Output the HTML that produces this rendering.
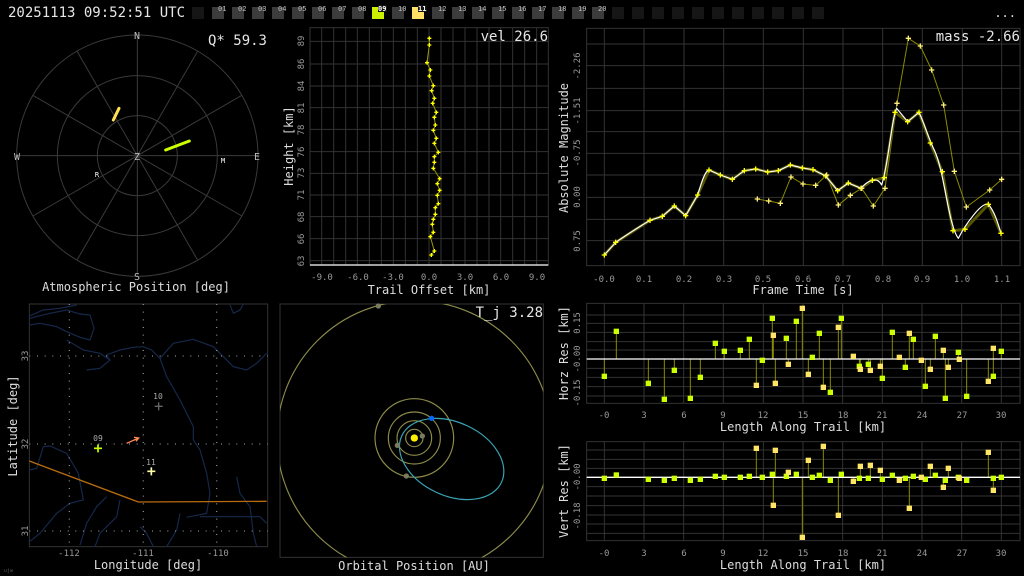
<!DOCTYPE html>
<html><head><meta charset="utf-8"><style>
html,body{margin:0;padding:0;background:#000;width:1024px;height:576px;overflow:hidden}
svg{display:block}
text{font-family:"DejaVu Sans Mono","Liberation Mono",monospace}
.t{fill:#ddd;font-size:12px}
.k{fill:#999;font-size:9px}
.big{fill:#e6e6e6;font-size:14px}
.g{stroke:#333;stroke-width:3;fill:none}
.c{stroke:#ffff00;stroke-width:4;fill:none}
</style></head><body>
<svg width="1024" height="576" viewBox="0 0 1024 576" xmlns="http://www.w3.org/2000/svg">
<rect width="1024" height="576" fill="#000"/>
<!-- top bar -->
<text x="8" y="17" class="big" style="font-size:14px">20251113 09:52:51 UTC</text>
<g>
<rect x="192" y="7" width="12" height="12" fill="#161616"/>
<g fill="#3c3c3c">
<rect x="212" y="7" width="12" height="12"/><rect x="232" y="7" width="12" height="12"/><rect x="252" y="7" width="12" height="12"/><rect x="272" y="7" width="12" height="12"/><rect x="292" y="7" width="12" height="12"/><rect x="312" y="7" width="12" height="12"/><rect x="332" y="7" width="12" height="12"/><rect x="352" y="7" width="12" height="12"/>
<rect x="392" y="7" width="12" height="12"/>
<rect x="432" y="7" width="12" height="12"/><rect x="452" y="7" width="12" height="12"/><rect x="472" y="7" width="12" height="12"/><rect x="492" y="7" width="12" height="12"/><rect x="512" y="7" width="12" height="12"/><rect x="532" y="7" width="12" height="12"/><rect x="552" y="7" width="12" height="12"/><rect x="572" y="7" width="12" height="12"/><rect x="592" y="7" width="12" height="12"/>
</g>
<rect x="372" y="7" width="12" height="12" fill="#ccee00"/>
<rect x="412" y="7" width="12" height="12" fill="#ffe066"/>
<g fill="#161616">
<rect x="612" y="7" width="12" height="12"/><rect x="632" y="7" width="12" height="12"/><rect x="652" y="7" width="12" height="12"/><rect x="672" y="7" width="12" height="12"/><rect x="692" y="7" width="12" height="12"/><rect x="712" y="7" width="12" height="12"/><rect x="732" y="7" width="12" height="12"/><rect x="752" y="7" width="12" height="12"/><rect x="772" y="7" width="12" height="12"/><rect x="792" y="7" width="12" height="12"/><rect x="812" y="7" width="12" height="12"/>
</g>
<rect x="378" y="5" width="9" height="7" fill="#111"/><rect x="418" y="5" width="9" height="7" fill="#111"/>
<g style="font-size:7px" fill="#bbb">
<text x="218" y="11">01</text><text x="238" y="11">02</text><text x="258" y="11">03</text><text x="278" y="11">04</text><text x="298" y="11">05</text><text x="318" y="11">06</text><text x="338" y="11">07</text><text x="358" y="11">08</text><text x="378" y="11" fill="#fff" style="font-weight:bold">09</text><text x="398" y="11">10</text><text x="418" y="11" fill="#fff" style="font-weight:bold">11</text><text x="438" y="11">12</text><text x="458" y="11">13</text><text x="478" y="11">14</text><text x="498" y="11">15</text><text x="518" y="11">16</text><text x="538" y="11">17</text><text x="558" y="11">18</text><text x="578" y="11">19</text><text x="598" y="11">20</text>
</g>
<text x="1016" y="17" text-anchor="end" class="t">...</text>
</g>

<!-- polar -->
<g transform="translate(0,25) scale(0.33333)" stroke="#3a3a3a" stroke-width="3" fill="none">
<circle cx="412" cy="392" r="120"/><circle cx="412" cy="392" r="240"/><circle cx="412" cy="392" r="362"/>
<line x1="50" y1="392" x2="774" y2="392"/><line x1="412" y1="30" x2="412" y2="754"/>
<line x1="98.5" y1="211" x2="725.5" y2="573"/><line x1="98.5" y1="573" x2="725.5" y2="211"/>
<line x1="231" y1="78.5" x2="593" y2="705.5"/><line x1="231" y1="705.5" x2="593" y2="78.5"/>
<line x1="340" y1="285" x2="357" y2="250" stroke="#ffe055" stroke-width="9" stroke-linecap="round"/>
<line x1="497" y1="375" x2="568" y2="348" stroke="#ccff00" stroke-width="9" stroke-linecap="round"/>
</g>
<g class="t" text-anchor="middle" style="font-size:10px;fill:#bbb">
<text x="137" y="39">N</text><text x="137" y="280">S</text><text x="17" y="160">W</text><text x="257" y="160">E</text><text x="137" y="160">Z</text>
<text x="223" y="163" style="font-size:7px;fill:#fff">M</text><text x="97" y="177" style="font-size:7px;fill:#fff">R</text>
</g>
<text x="267" y="45" text-anchor="end" class="big">Q* 59.3</text>
<text x="136" y="291" text-anchor="middle" class="t">Atmospheric Position [deg]</text>

<!-- height/trail -->
<g transform="translate(280,25) scale(0.33333)">
<rect x="90" y="8" width="715" height="712" class="g"/>
<g class="g">
<path d="M125 8V720M161 8V720M197 8V720M232 8V720M268 8V720M304 8V720M340 8V720M376 8V720M412 8V720M447 8V720M483 8V720M519 8V720M555 8V720M591 8V720M627 8V720M662 8V720M698 8V720M734 8V720M770 8V720"/>
<path d="M90 49H805M90 117H805M90 183H805M90 248H805M90 313H805M90 380H805M90 445H805M90 510H805M90 575H805M90 641H805M90 707H805"/>
</g>
<line x1="90" y1="720" x2="805" y2="720" stroke="#fff" stroke-width="4"/>
<polyline fill="none" stroke="#999900" stroke-width="3" points="448,40 448,60 441,113 451,135 448,153 460,182 455,197 463,220 458,235 469,262 463,277 466,300 460,316 469,340 463,355 475,382 463,395 463,412 460,430 479,461 472,476 479,496 472,511 475,536 466,548 466,568 460,583 457,598 460,622 451,635 463,678 454,690"/>
<path class="c" d="M442 40h12M448 34v12M442 60h12M448 54v12M435 113h12M441 107v12M445 135h12M451 129v12M442 153h12M448 147v12M454 182h12M460 176v12M449 197h12M455 191v12M457 220h12M463 214v12M452 235h12M458 229v12M463 262h12M469 256v12M457 277h12M463 271v12M460 300h12M466 294v12M454 316h12M460 310v12M463 340h12M469 334v12M457 355h12M463 349v12M469 382h12M475 376v12M457 395h12M463 389v12M457 412h12M463 406v12M454 430h12M460 424v12M473 461h12M479 455v12M466 476h12M472 470v12M473 496h12M479 490v12M466 511h12M472 505v12M469 536h12M475 530v12M460 548h12M466 542v12M460 568h12M466 562v12M454 583h12M460 577v12M451 598h12M457 592v12M454 622h12M460 616v12M445 635h12M451 629v12M457 678h12M463 672v12M448 690h12M454 684v12"/>
</g>
<text x="548" y="41" text-anchor="end" class="big">vel 26.6</text>
<g class="k" text-anchor="middle">
<text transform="translate(304,41) rotate(-90)">89</text><text transform="translate(304,64) rotate(-90)">86</text><text transform="translate(304,86) rotate(-90)">84</text><text transform="translate(304,108) rotate(-90)">81</text><text transform="translate(304,130) rotate(-90)">78</text><text transform="translate(304,152) rotate(-90)">76</text><text transform="translate(304,173) rotate(-90)">73</text><text transform="translate(304,195) rotate(-90)">71</text><text transform="translate(304,217) rotate(-90)">68</text><text transform="translate(304,239) rotate(-90)">66</text><text transform="translate(304,261) rotate(-90)">63</text>
<text x="322" y="280">-9.0</text><text x="358" y="280">-6.0</text><text x="393" y="280">-3.0</text><text x="429" y="280">0.0</text><text x="465" y="280">3.0</text><text x="501" y="280">6.0</text><text x="537" y="280">9.0</text>
</g>
<text transform="translate(293,146) rotate(-90)" text-anchor="middle" class="t">Height [km]</text>
<text x="429" y="294" text-anchor="middle" class="t">Trail Offset [km]</text>

<!-- magnitude -->
<g transform="translate(555,25) scale(0.33333)">
<rect x="95" y="10" width="1300" height="712" class="g"/>
<g class="g">
<path d="M148 10V722M267 10V722M387 10V722M506 10V722M625 10V722M745 10V722M864 10V722M983 10V722M1102 10V722M1222 10V722M1340 10V722"/>
<path d="M95 57H1395M95 122H1395M95 190H1395M95 257H1395M95 320H1395M95 385H1395M95 450H1395M95 517H1395M95 583H1395M95 647H1395"/>
</g>
<polyline fill="none" stroke="#8a8a00" stroke-width="3" points="607,522 641,528 676,535 708,456 744,477 782,481 815,450 850,540 886,511 920,490 955,543 990,490 1026,235 1060,40 1096,63 1130,135 1166,240 1198,439 1234,546 1304,495 1340,463"/>
<polyline fill="none" stroke="#555500" stroke-width="9" stroke-linejoin="round" points="148,690 182,652 285,586 322,574 358,543 392,572 428,510 462,435 496,450 532,463 568,437 602,432 638,441 670,437 706,420 742,429 774,434 812,453 848,497 880,474 918,490 952,466 988,458 1020,262 1058,290 1092,262 1126,354 1162,440 1194,617 1230,613 1300,538 1338,625"/>
<path fill="none" stroke="#fff" stroke-width="3.5" stroke-linejoin="round" d="M148,690 L182,652 C230,620 260,600 285,586 L322,574 L358,543 L392,572 L428,510 C440,470 450,438 462,435 L496,450 L532,463 L568,437 L602,432 L638,441 L670,437 L706,420 L742,429 L774,434 L812,453 L848,497 L880,474 L918,490 C935,470 965,450 980,480 C1000,420 1010,280 1025,250 L1058,290 L1092,262 C1110,300 1120,340 1140,380 C1170,450 1180,600 1210,640 C1230,600 1280,530 1300,538 C1320,560 1330,600 1338,625"/>
<path class="c" d="M140 690h16M148 682v16M174 652h16M182 644v16M277 586h16M285 578v16M314 574h16M322 566v16M350 543h16M358 535v16M384 572h16M392 564v16M420 510h16M428 502v16M454 435h16M462 427v16M488 450h16M496 442v16M524 463h16M532 455v16M560 437h16M568 429v16M594 432h16M602 424v16M630 441h16M638 433v16M662 437h16M670 429v16M698 420h16M706 412v16M734 429h16M742 421v16M766 434h16M774 426v16M804 453h16M812 445v16M840 497h16M848 489v16M872 474h16M880 466v16M910 490h16M918 482v16M944 466h16M952 458v16M980 458h16M988 450v16M1012 262h16M1020 254v16M1050 290h16M1058 282v16M1084 262h16M1092 254v16M1118 354h16M1126 346v16M1154 440h16M1162 432v16M1186 617h16M1194 609v16M1222 613h16M1230 605v16M1292 538h16M1300 530v16M1330 625h16M1338 617v16"/>
<path d="M599 522h16M607 514v16M633 528h16M641 520v16M668 535h16M676 527v16M700 456h16M708 448v16M736 477h16M744 469v16M774 481h16M782 473v16M807 450h16M815 442v16M842 540h16M850 532v16M878 511h16M886 503v16M912 490h16M920 482v16M947 543h16M955 535v16M982 490h16M990 482v16M1018 235h16M1026 227v16M1052 40h16M1060 32v16M1088 63h16M1096 55v16M1122 135h16M1130 127v16M1158 240h16M1166 232v16M1190 439h16M1198 431v16M1226 546h16M1234 538v16M1296 495h16M1304 487v16M1332 463h16M1340 455v16" stroke="#ffee77" stroke-width="4" fill="none"/>
</g>
<text x="1020" y="41" text-anchor="end" class="big">mass -2.66</text>
<g class="k" text-anchor="middle">
<text transform="translate(580,66) rotate(-90)">-2.26</text><text transform="translate(580,111) rotate(-90)">-1.51</text><text transform="translate(580,153) rotate(-90)">-0.75</text><text transform="translate(580,197) rotate(-90)">0.00</text><text transform="translate(580,241) rotate(-90)">0.75</text>
<text x="604" y="282">-0.0</text><text x="644" y="282">0.1</text><text x="684" y="282">0.2</text><text x="724" y="282">0.3</text><text x="763" y="282">0.5</text><text x="803" y="282">0.6</text><text x="843" y="282">0.7</text><text x="883" y="282">0.8</text><text x="922" y="282">0.9</text><text x="962" y="282">1.0</text><text x="1002" y="282">1.1</text>
</g>
<text transform="translate(568,148) rotate(-90)" text-anchor="middle" class="t">Absolute Magnitude</text>
<text x="803" y="294" text-anchor="middle" class="t">Frame Time [s]</text>

<!-- map -->
<g transform="translate(0,300) scale(0.33333)">
<rect x="88" y="12" width="715" height="728" class="g"/>
<g stroke="#16284a" stroke-width="3.5" fill="none">
<path d="M88 55 L150 40 L200 30 L240 42 L270 45 L282 85 L270 120 L240 112 L200 95 L170 80 L120 70 L88 75"/>
<path d="M88 48 L130 30 L180 25 L230 15"/>
<path d="M690 15 L700 40 L720 30 L730 12"/>
<path d="M260 210 L300 205 L330 180 L320 165 L360 150 L400 142 L430 140 L455 150 L480 175 L500 230 L540 300 L580 380 L580 420 L600 450 L620 520 L630 580 L620 640 L560 652"/>
<path d="M480 175 L520 130 L580 118 L640 140 L700 200 L740 210 L770 190 L800 160"/>
<path d="M330 180 L300 160 L250 150 L200 120"/>
<path d="M130 440 L150 438 L200 460 L235 520 L250 600 L210 610 L170 640 L120 700 L88 725"/>
<path d="M88 510 L110 505 L130 440"/>
<path d="M320 590 L290 620 L260 670 L240 735"/>
<path d="M360 600 L350 650 L300 700 L285 740"/>
<path d="M420 680 L440 700 L460 740"/>
<path d="M540 640 L530 690 L500 740"/>
<path d="M710 530 L720 580 L750 620 L760 700 L770 740"/>
<path d="M600 650 L700 650 L780 650 L800 670"/>
</g>
<path d="M88 483 L415 606 L800 604" stroke="#b86a10" stroke-width="4" fill="none"/>
<g stroke="#888" stroke-width="4" stroke-dasharray="3 20" fill="none">
<path d="M208 12V740M430 12V740M650 12V740M88 168H803M88 432H803M88 693H803"/>
</g>
<path d="M380 430 L412 416 M402 412 L416 414 L408 424" stroke="#ff8855" stroke-width="4" fill="none"/>
<path d="M282 445h24M294 433v24" stroke="#ccff00" stroke-width="5"/>
<path d="M464 319h24M476 307v24" stroke="#666" stroke-width="4"/>
<path d="M442 514h24M454 502v24" stroke="#ffffaa" stroke-width="5"/>
</g>
<g class="k" text-anchor="middle" style="fill:#aaa;font-size:8px">
<text x="98" y="441">09</text><text x="158" y="399">10</text><text x="151" y="465">11</text>
</g>
<g class="k" text-anchor="middle">
<text transform="translate(28,356) rotate(-90)">33</text><text transform="translate(28,444) rotate(-90)">32</text><text transform="translate(28,531) rotate(-90)">31</text>
<text x="69" y="556">-112</text><text x="143" y="556">-111</text><text x="218" y="556">-110</text>
</g>
<text transform="translate(17,426) rotate(-90)" text-anchor="middle" class="t">Latitude [deg]</text>
<text x="148" y="569" text-anchor="middle" class="t">Longitude [deg]</text>

<!-- orbit -->
<defs><clipPath id="oc"><rect x="0" y="12" width="790" height="760"/></clipPath></defs>
<g transform="translate(280,300) scale(0.33333)">
<rect x="0" y="12" width="790" height="760" class="g"/>
<g clip-path="url(#oc)" fill="none" stroke="#8c8c4a" stroke-width="3.5">
<circle cx="403" cy="414" r="412"/>
<circle cx="403" cy="414" r="26"/><circle cx="403" cy="414" r="52"/><circle cx="403" cy="414" r="78"/><circle cx="403" cy="414" r="118"/>
<ellipse cx="515" cy="477" rx="165" ry="110" transform="rotate(25 515 477)" stroke="#3aa4b4"/>
</g>
<circle cx="403" cy="414" r="11" fill="#ffee00"/>
<g fill="#7a7a60"><circle cx="427" cy="408" r="8"/><circle cx="352" cy="436" r="8"/><circle cx="379" cy="528" r="8"/><circle cx="295" cy="18" r="8"/></g>
<circle cx="455" cy="355" r="8" fill="#0066ff"/>
</g>
<text x="543" y="317" text-anchor="end" class="big">T_j 3.28</text>
<text x="414" y="570" text-anchor="middle" class="t">Orbital Position [AU]</text>

<!-- horz res -->
<g transform="translate(555,300) scale(0.33333)">
<rect x="95" y="10" width="1300" height="300" class="g"/>
<g class="g">
<path d="M148 10V310M267 10V310M386 10V310M505 10V310M625 10V310M744 10V310M863 10V310M982 10V310M1101 10V310M1220 10V310M1339 10V310"/>
<path d="M95 45H1395M95 70H1395M95 97H1395M95 125H1395M95 150H1395M95 205H1395M95 232H1395M95 260H1395M95 288H1395"/>
</g>
<path stroke="#8a8a00" stroke-width="3" fill="none" d="M148 177V229M184 177V94M280 177V250M328 177V298M358 177V211M406 177V295M436 177V232M481 177V130M508 177V154M556 177V151M583 177V118M604 177V256M622 177V181M652 177V55M655 177V106M661 177V250M694 177V115M700 177V193M724 177V64M742 177V25M760 177V223M772 177V172M793 177V100M805 177V262M826 177V277M850 177V82M859 177V55M895 177V169M913 177V199M916 177V208M940 177V193M946 177V211M976 177V199M982 177V235M1012 177V97M1033 177V172M1051 177V202M1063 177V100M1075 177V118M1099 177V181M1111 177V259M1126 177V208M1141 177V109M1165 177V151M1171 177V295M1180 177V202M1210 177V157M1213 177V178M1235 177V289M1300 177V244M1315 177V145M1315 177V229M1339 177V154"/>
<line x1="95" y1="177" x2="1395" y2="177" stroke="#fff" stroke-width="4"/>
<g fill="#ccff00">
<rect x="140" y="221" width="16" height="16"/><rect x="176" y="86" width="16" height="16"/><rect x="272" y="242" width="16" height="16"/><rect x="320" y="290" width="16" height="16"/><rect x="350" y="203" width="16" height="16"/><rect x="398" y="287" width="16" height="16"/><rect x="428" y="224" width="16" height="16"/><rect x="473" y="122" width="16" height="16"/><rect x="500" y="146" width="16" height="16"/><rect x="548" y="143" width="16" height="16"/><rect x="575" y="110" width="16" height="16"/><rect x="614" y="173" width="16" height="16"/><rect x="644" y="47" width="16" height="16"/><rect x="686" y="107" width="16" height="16"/><rect x="716" y="56" width="16" height="16"/><rect x="764" y="164" width="16" height="16"/><rect x="785" y="92" width="16" height="16"/><rect x="818" y="269" width="16" height="16"/><rect x="851" y="47" width="16" height="16"/><rect x="905" y="191" width="16" height="16"/><rect x="932" y="185" width="16" height="16"/><rect x="974" y="227" width="16" height="16"/><rect x="1004" y="89" width="16" height="16"/><rect x="1043" y="194" width="16" height="16"/><rect x="1067" y="110" width="16" height="16"/><rect x="1103" y="251" width="16" height="16"/><rect x="1133" y="101" width="16" height="16"/><rect x="1163" y="287" width="16" height="16"/><rect x="1202" y="149" width="16" height="16"/><rect x="1227" y="281" width="16" height="16"/><rect x="1307" y="221" width="16" height="16"/><rect x="1331" y="146" width="16" height="16"/>
</g>
<g fill="#ffe566">
<rect x="596" y="248" width="16" height="16"/><rect x="647" y="98" width="16" height="16"/><rect x="653" y="242" width="16" height="16"/><rect x="692" y="185" width="16" height="16"/><rect x="734" y="17" width="16" height="16"/><rect x="752" y="215" width="16" height="16"/><rect x="797" y="254" width="16" height="16"/><rect x="842" y="74" width="16" height="16"/><rect x="887" y="161" width="16" height="16"/><rect x="908" y="200" width="16" height="16"/><rect x="938" y="203" width="16" height="16"/><rect x="968" y="191" width="16" height="16"/><rect x="1025" y="164" width="16" height="16"/><rect x="1055" y="92" width="16" height="16"/><rect x="1091" y="173" width="16" height="16"/><rect x="1118" y="200" width="16" height="16"/><rect x="1157" y="143" width="16" height="16"/><rect x="1172" y="194" width="16" height="16"/><rect x="1205" y="170" width="16" height="16"/><rect x="1292" y="236" width="16" height="16"/><rect x="1307" y="137" width="16" height="16"/>
</g>
</g>
<g class="k" text-anchor="middle">
<text transform="translate(580,323) rotate(-90)">0.15</text><text transform="translate(580,359) rotate(-90)">-0.00</text><text transform="translate(580,393) rotate(-90)">-0.15</text>
<text x="604" y="418">-0</text><text x="644" y="418">3</text><text x="684" y="418">6</text><text x="723" y="418">9</text><text x="763" y="418">12</text><text x="803" y="418">15</text><text x="843" y="418">18</text><text x="882" y="418">21</text><text x="922" y="418">24</text><text x="962" y="418">27</text><text x="1001" y="418">30</text>
</g>
<text transform="translate(568,353) rotate(-90)" text-anchor="middle" class="t">Horz Res [km]</text>
<text x="803" y="431" text-anchor="middle" class="t">Length Along Trail [km]</text>

<!-- vert res -->
<g transform="translate(555,300) scale(0.33333)">
<rect x="95" y="425" width="1300" height="297" class="g"/>
<g class="g">
<path d="M148 425V722M267 425V722M386 425V722M505 425V722M625 425V722M744 425V722M863 425V722M982 425V722M1101 425V722M1220 425V722M1339 425V722"/>
<path d="M95 450H1395M95 478H1395M95 505H1395M95 560H1395M95 588H1395M95 617H1395M95 645H1395M95 672H1395M95 700H1395"/>
</g>
<path stroke="#8a8a00" stroke-width="3" fill="none" d="M604 532V445M652 532V523M655 532V616M661 532V451M700 532V517M742 532V712M760 532V481M805 532V439M850 532V646M895 532V544M916 532V499M946 532V496M976 532V511M1063 532V625M1126 532V499M1165 532V562M1180 532V505M1300 532V457M1315 532V571"/>
<line x1="95" y1="532" x2="1395" y2="532" stroke="#fff" stroke-width="4"/>
<g fill="#ccff00">
<rect x="140" y="527" width="16" height="16"/><rect x="176" y="517" width="16" height="16"/><rect x="272" y="530" width="16" height="16"/><rect x="320" y="533" width="16" height="16"/><rect x="350" y="527" width="16" height="16"/><rect x="398" y="533" width="16" height="16"/><rect x="428" y="530" width="16" height="16"/><rect x="473" y="521" width="16" height="16"/><rect x="500" y="524" width="16" height="16"/><rect x="548" y="524" width="16" height="16"/><rect x="575" y="521" width="16" height="16"/><rect x="614" y="524" width="16" height="16"/><rect x="644" y="515" width="16" height="16"/><rect x="686" y="521" width="16" height="16"/><rect x="716" y="515" width="16" height="16"/><rect x="764" y="524" width="16" height="16"/><rect x="785" y="518" width="16" height="16"/><rect x="818" y="533" width="16" height="16"/><rect x="851" y="515" width="16" height="16"/><rect x="905" y="527" width="16" height="16"/><rect x="932" y="527" width="16" height="16"/><rect x="974" y="530" width="16" height="16"/><rect x="1004" y="518" width="16" height="16"/><rect x="1043" y="527" width="16" height="16"/><rect x="1067" y="521" width="16" height="16"/><rect x="1103" y="530" width="16" height="16"/><rect x="1133" y="518" width="16" height="16"/><rect x="1163" y="533" width="16" height="16"/><rect x="1202" y="524" width="16" height="16"/><rect x="1227" y="533" width="16" height="16"/><rect x="1307" y="527" width="16" height="16"/><rect x="1331" y="524" width="16" height="16"/>
</g>
<g fill="#ffe566">
<rect x="596" y="437" width="16" height="16"/><rect x="647" y="608" width="16" height="16"/><rect x="653" y="443" width="16" height="16"/><rect x="692" y="509" width="16" height="16"/><rect x="734" y="704" width="16" height="16"/><rect x="752" y="473" width="16" height="16"/><rect x="797" y="431" width="16" height="16"/><rect x="842" y="638" width="16" height="16"/><rect x="887" y="536" width="16" height="16"/><rect x="908" y="491" width="16" height="16"/><rect x="938" y="488" width="16" height="16"/><rect x="968" y="503" width="16" height="16"/><rect x="1025" y="533" width="16" height="16"/><rect x="1055" y="617" width="16" height="16"/><rect x="1091" y="524" width="16" height="16"/><rect x="1118" y="491" width="16" height="16"/><rect x="1157" y="554" width="16" height="16"/><rect x="1172" y="497" width="16" height="16"/><rect x="1205" y="527" width="16" height="16"/><rect x="1292" y="449" width="16" height="16"/><rect x="1307" y="563" width="16" height="16"/>
</g>
</g>
<g class="k" text-anchor="middle">
<text transform="translate(580,477) rotate(-90)">-0.00</text><text transform="translate(580,516) rotate(-90)">-0.18</text>
<text x="604" y="556">-0</text><text x="644" y="556">3</text><text x="684" y="556">6</text><text x="723" y="556">9</text><text x="763" y="556">12</text><text x="803" y="556">15</text><text x="843" y="556">18</text><text x="882" y="556">21</text><text x="922" y="556">24</text><text x="962" y="556">27</text><text x="1001" y="556">30</text>
</g>
<text transform="translate(568,491) rotate(-90)" text-anchor="middle" class="t">Vert Res [km]</text>
<text x="803" y="569" text-anchor="middle" class="t">Length Along Trail [km]</text>
<text x="4" y="572" style="font-size:5px;fill:#555">ujw</text>
</svg>
</body></html>
